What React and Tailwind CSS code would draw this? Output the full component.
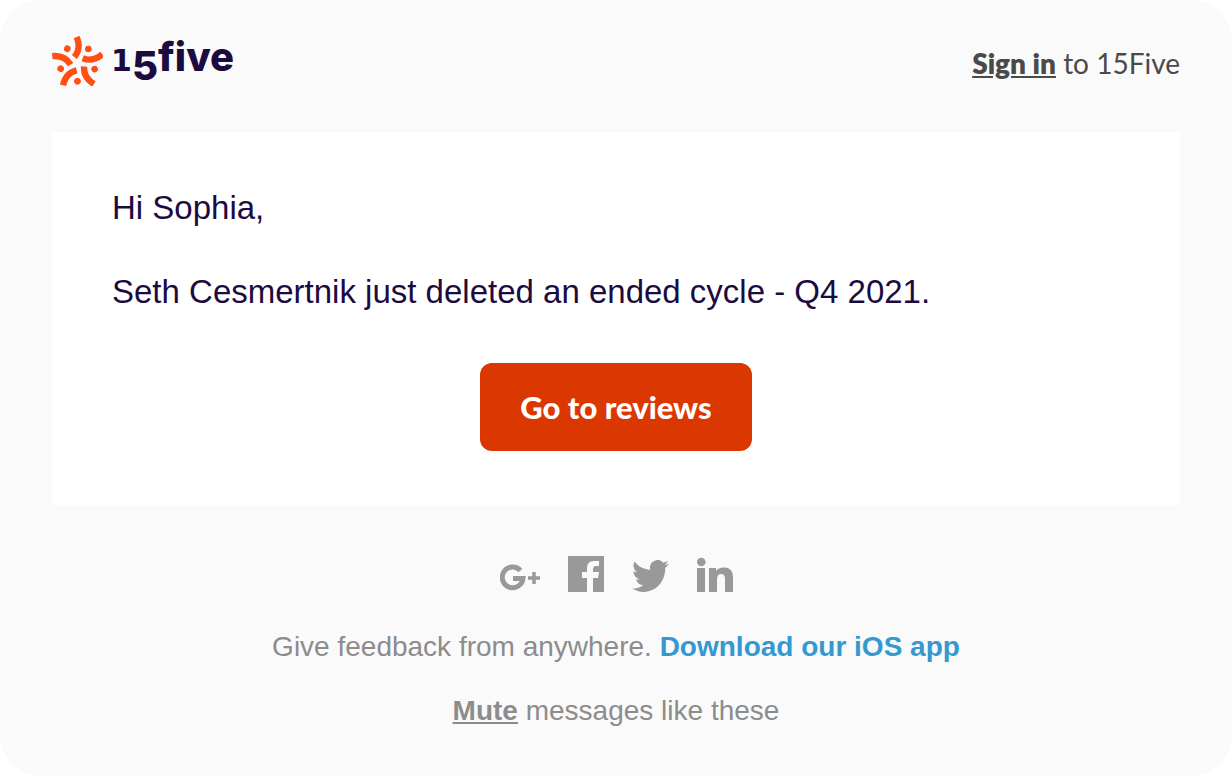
const ARM_ANGLES = [0, 72, 144, 216, 288];

const Logo = () => {
    return (
        <a
            href="#home"
            aria-label="15five"
            className="flex h-[50px] items-center gap-2"
        >
            <svg viewBox="36 30 153 150" className="w-[51px] h-[50px]">
                {ARM_ANGLES.map((angle) => (
                    <g key={angle} transform={`rotate(${angle} 113 112)`}>
                        <path
                            d="M110 33C119 54 120 73 103 93"
                            fill="none"
                            stroke="#ff4f12"
                            strokeWidth="19"
                        />
                        <circle cx="145" cy="69" r="10" fill="#ff4f12" />
                    </g>
                ))}
            </svg>
            <span className="font-['Inter',sans-serif] font-extrabold text-[40px] leading-none text-[#1c0b40]">
                <span className="font-['DejaVu_Sans',sans-serif] text-[30px] leading-none">
                    1
                </span>
                <span className="align-sub leading-none">5</span>
                five
            </span>
        </a>
    );
};

const GooglePlusIcon = () => (
    <svg viewBox="0 0 40 36" className="w-10 h-9" fill="none" stroke="#999">
        <path
            d="M20.5 14.5A10.4 10.4 0 1 0 23 22.5H13"
            strokeWidth="5"
        />
        <path d="M28 22H40M34 16V28" strokeWidth="3.5" />
    </svg>
);

const FacebookIcon = () => (
    <svg viewBox="0 0 36 36" className="size-9" fill="#999">
        <path d="M0 0H36V36H25V22H30L31 16H25V13Q25 10 28 10H31V5H26Q19 5 19 12V16H14V22H19V36H0Z" />
    </svg>
);

const TwitterIcon = () => (
    <svg
        viewBox="0 2.2 24 19.6"
        preserveAspectRatio="none"
        className="mt-1 w-[37px] h-8"
        fill="#999"
    >
        <path d="M23.95 4.57a10 10 0 0 1-2.82.78 4.96 4.96 0 0 0 2.16-2.73 9.9 9.9 0 0 1-3.12 1.19 4.92 4.92 0 0 0-8.38 4.48C7.69 8.1 4.07 6.13 1.64 3.16a4.92 4.92 0 0 0 1.52 6.57 4.9 4.9 0 0 1-2.23-.61v.06a4.92 4.92 0 0 0 3.95 4.83 5 5 0 0 1-2.21.08 4.94 4.94 0 0 0 4.6 3.42A9.87 9.87 0 0 1 0 19.54a14 14 0 0 0 7.55 2.21c9.05 0 14-7.5 14-13.98 0-.21 0-.42-.02-.63a9.94 9.94 0 0 0 2.42-2.57Z" />
    </svg>
);

const LinkedinIcon = () => (
    <svg viewBox="0 0 36 36" className="size-9" fill="#999">
        <circle cx="4.3" cy="6" r="4.3" />
        <path d="M0 12H8V36H0ZM12 12H19V15Q21 11.500 27 11.500Q36 11.500 36 21V36H28V23Q28 18 24 18Q20 18 20 23.500V36H12Z" />
    </svg>
);

const SOCIAL_LINKS = [
    { label: "Google Plus", icon: GooglePlusIcon },
    { label: "Facebook", icon: FacebookIcon },
    { label: "Twitter", icon: TwitterIcon },
    { label: "LinkedIn", icon: LinkedinIcon },
];

export const App = () => {
    return (
        <div className="min-h-screen bg-[#fafafa] rounded-[40px] px-[52px] py-9 font-['Liberation_Sans',Arial,sans-serif]">
            <header className="flex items-center justify-between">
                <Logo />
                <p className="pt-1 font-['Lato',sans-serif] text-[28px] leading-10 text-[#4a4a4a]">
                    <a href="#sign-in" className="font-extrabold underline">
                        Sign in
                    </a>{" "}
                    to 15Five
                </p>
            </header>

            <main className="mt-[46px] bg-white px-[60px] pt-14 pb-[54px] text-[33px] leading-10 text-[#1c0b40]">
                <p>Hi Sophia,</p>
                <p className="mt-11">
                    Seth Cesmertnik just deleted an ended cycle - Q4 2021.
                </p>
                <div className="mt-[51px] flex justify-center">
                    <button
                        type="button"
                        className="rounded-xl bg-[#db3700] px-10 py-6 font-['Lato',sans-serif] text-[31px] leading-10 font-black text-white"
                    >
                        Go to reviews
                    </button>
                </div>
            </main>

            <footer className="mt-[51px] text-center text-[28px] leading-10 text-[#8c8c8c]">
                <nav className="flex justify-center gap-7">
                    {SOCIAL_LINKS.map(({ label, icon: Icon }) => (
                        <a key={label} href="#social" aria-label={label}>
                            <Icon />
                        </a>
                    ))}
                </nav>
                <p className="mt-[35px]">
                    Give feedback from anywhere.{" "}
                    <a href="#ios" className="font-bold text-[#3498d1]">
                        Download our iOS app
                    </a>
                </p>
                <p className="mt-6">
                    <a href="#mute" className="font-bold underline">
                        Mute
                    </a>{" "}
                    messages like these
                </p>
            </footer>
        </div>
    );
};

export default App;
